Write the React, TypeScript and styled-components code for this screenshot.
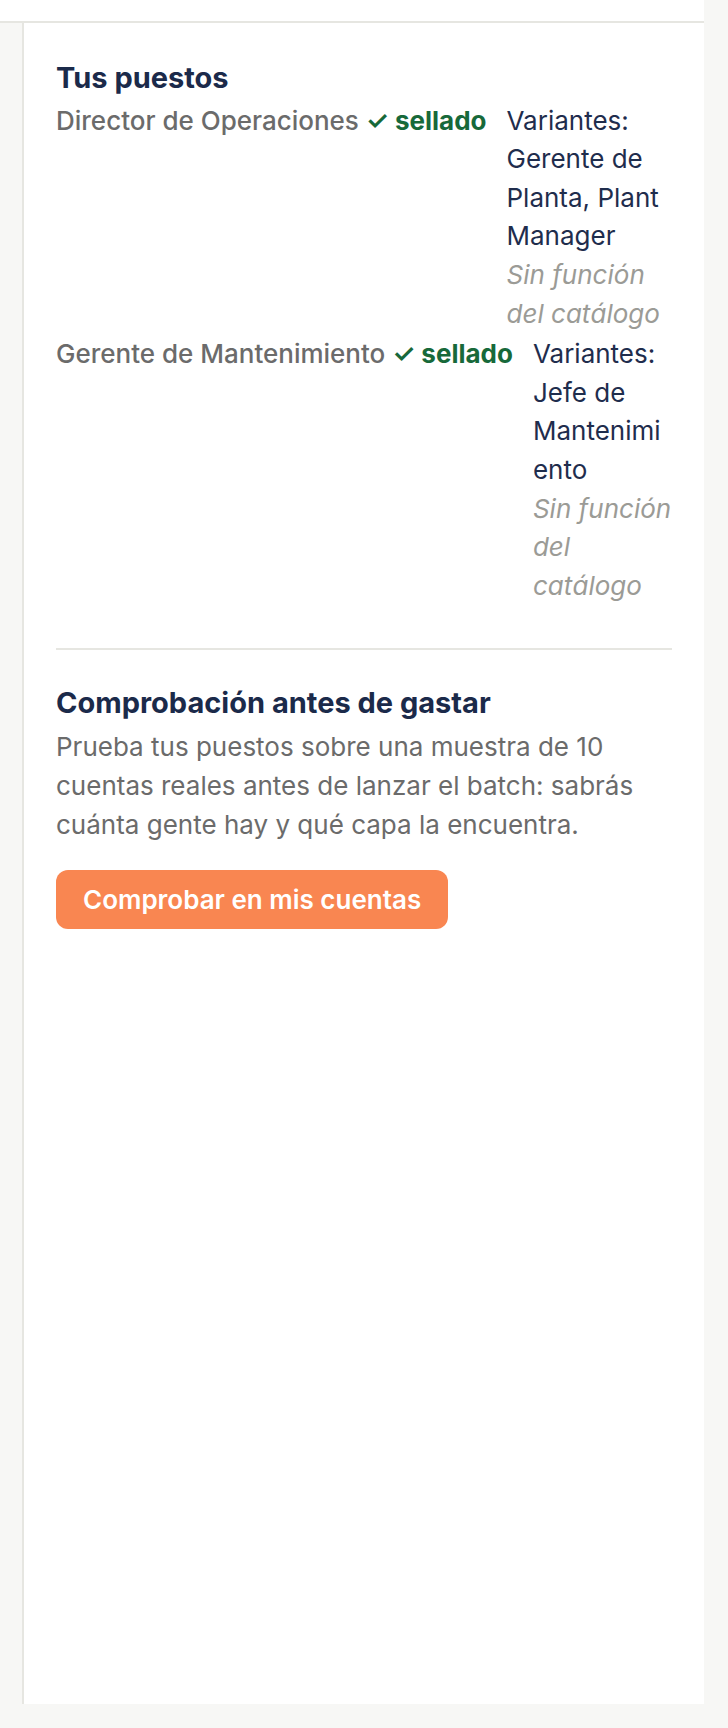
import styled, { createGlobalStyle } from "styled-components";

const GlobalStyle = createGlobalStyle`
  html, body {
    margin: 0;
    padding: 0;
    background: #f7f7f5;
  }
  body {
    font-family: Inter, "Noto Sans", "Liberation Sans", sans-serif;
    -webkit-font-smoothing: antialiased;
  }
  * {
    box-sizing: border-box;
  }
`;

const Page = styled.div`
  width: 704px;
  min-height: 1728px;
  display: flex;
  flex-direction: column;
`;

const TopStrip = styled.div`
  height: 23px;
  background: #ffffff;
  border-bottom: 2px solid #e6e6e1;
`;

const Panel = styled.aside`
  margin-left: 22px;
  height: 1681px;
  background: #ffffff;
  border-left: 2px solid #e6e6e1;
  padding: 0 32px;
`;

const Section = styled.section<{ $divider?: boolean }>`
  padding: ${({ $divider }) => ($divider ? "34px 0 0" : "36px 0 43px")};
  border-top: ${({ $divider }) => ($divider ? "2px solid #e6e6e1" : "none")};
`;

const Heading = styled.h2`
  margin: 0 0 5px;
  font-size: 29px;
  line-height: 1.3;
  font-weight: 700;
  color: #1b2a4a;
`;

const RoleList = styled.div`
  display: flex;
  flex-direction: column;
  gap: 2px;
`;

const RoleRow = styled.div`
  display: flex;
  align-items: flex-start;
  gap: 20px;
  font-size: 26px;
  line-height: 38.6px;
`;

const RoleName = styled.span`
  white-space: nowrap;
  font-weight: 500;
  color: #6b6b6b;
`;

const Sealed = styled.span`
  font-weight: 700;
  color: #17693a;
`;

const Check = styled.span`
  font-weight: 600;
`;

const VariantCol = styled.div`
  flex: 1;
  min-width: 0;
  overflow-wrap: anywhere;
  color: #1f2d4d;
`;

const NoCatalog = styled.div`
  font-style: italic;
  color: #9b9b96;
`;

const Paragraph = styled.p`
  margin: 0;
  font-size: 26px;
  line-height: 39px;
  color: #6b6b6b;
`;

const PrimaryButton = styled.button`
  margin-top: 26px;
  height: 59px;
  padding: 0 27px;
  display: inline-flex;
  align-items: center;
  border: none;
  border-radius: 12px;
  background: #f98651;
  color: #ffffff;
  font-family: inherit;
  font-size: 26px;
  font-weight: 600;
  cursor: pointer;
`;

const roles = [
  {
    name: "Director de Operaciones",
    variants: "Gerente de Planta, Plant Manager",
  },
  {
    name: "Gerente de Mantenimiento",
    variants: "Jefe de Mantenimiento",
  },
];

export default function App() {
  return (
    <>
      <GlobalStyle />
      <Page>
        <TopStrip />
        <Panel>
          <Section>
            <Heading>Tus puestos</Heading>
            <RoleList>
              {roles.map((r) => (
                <RoleRow key={r.name}>
                  <RoleName>
                    {r.name}{" "}
                    <Sealed>
                      <Check>✓</Check> sellado
                    </Sealed>
                  </RoleName>
                  <VariantCol>
                    <div>Variantes: {r.variants}</div>
                    <NoCatalog>Sin función del catálogo</NoCatalog>
                  </VariantCol>
                </RoleRow>
              ))}
            </RoleList>
          </Section>
          <Section $divider>
            <Heading>Comprobación antes de gastar</Heading>
            <Paragraph>
              Prueba tus puestos sobre una muestra de 10 cuentas reales antes de
              lanzar el batch: sabrás cuánta gente hay y qué capa la encuentra.
            </Paragraph>
            <PrimaryButton>Comprobar en mis cuentas</PrimaryButton>
          </Section>
        </Panel>
      </Page>
    </>
  );
}
